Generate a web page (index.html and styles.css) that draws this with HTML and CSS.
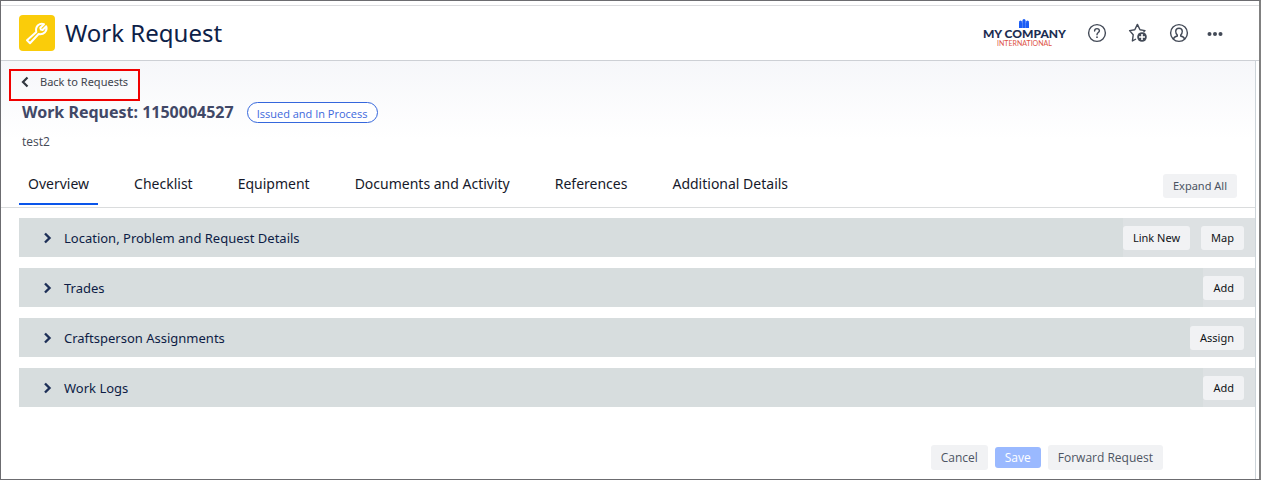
FILE: index.html
```html
<!DOCTYPE html>
<html lang="en">
<head>
<meta charset="utf-8">
<title>Work Request</title>
<meta name="viewport" content="width=device-width, initial-scale=1">
<link rel="stylesheet" href="styles.css">
</head>
<body>
<div class="window">
  <header class="app-header">
    <div class="app-icon">
      <svg width="36" height="36" viewBox="0 0 36 36" fill="none" stroke="#fff" stroke-width="2" stroke-linejoin="round">
        <path d="M8 25.300L17.300 17Q16.300 12.800 19 10.200Q21.700 8 25 9.200L21.300 12.700L21.800 14.500L23.600 15L27.200 11.300Q28.400 14.500 26 17.200Q23.400 19.800 19.600 19L11 28.300Z"/>
      </svg>
    </div>
    <h1>Work Request</h1>
    <div class="company-logo">
      <svg width="12" height="10" viewBox="0 0 12 10" fill="#1a5cf5">
        <circle cx="2.500" cy="3" r="1.500"/><circle cx="6" cy="1.600" r="1.500"/><circle cx="9.500" cy="3" r="1.500"/>
        <path d="M1 3.500h3.200v5.500H1zM4.400 2h3.200v7H4.400zM7.800 3.500H11V9H7.800z"/>
      </svg>
      <span class="company-name">MY COMPANY</span>
      <span class="company-sub">INTERNATIONAL</span>
    </div>
    <nav class="header-actions">
      <button type="button" aria-label="Help">
        <svg width="20" height="20" viewBox="0 0 20 20" fill="none" stroke="#434a57" stroke-width="1.400">
          <circle cx="10" cy="10" r="8.400"/>
          <path d="M7.600 8Q7.600 5.600 10 5.600T12.400 7.800C12.400 9.600 10 9.600 10 11.800" stroke-linecap="round"/>
          <circle cx="10" cy="14.200" r=".9" fill="#434a57" stroke="none"/>
        </svg>
      </button>
      <button type="button" aria-label="Add to favorites">
        <svg width="20" height="20" viewBox="0 0 20 20" fill="none" stroke="#434a57" stroke-width="1.400" stroke-linejoin="round">
          <path d="M8 16L4.400 18L5.200 11.800L1.600 7.600L6.800 6.800L9.400 1.400L12 6.800L17 7.600L15.500 9.200"/>
          <circle cx="14" cy="14" r="4.800" fill="#434a57" stroke="none"/>
          <path d="M14 11v6M11 14h6" stroke="#fff" stroke-width="1.600"/>
        </svg>
      </button>
      <button type="button" aria-label="Profile">
        <svg width="20" height="20" viewBox="0 0 20 20" fill="none" stroke="#434a57" stroke-width="1.400">
          <circle cx="10" cy="10" r="8.400"/>
          <path d="M4.400 16Q5 13.700 8.300 13V12Q6.700 10.600 6.700 8.300Q6.900 5.300 10 5.300T13.300 8.300Q13.300 10.600 11.700 12V13Q15 13.700 15.600 16"/>
        </svg>
      </button>
      <button type="button" class="more" aria-label="More">
        <svg width="16" height="20" viewBox="0 0 16 20" fill="#434a57">
          <circle cx="2.500" cy="11" r="2"/><circle cx="8" cy="11" r="2"/><circle cx="13.500" cy="11" r="2"/>
        </svg>
      </button>
    </nav>
  </header>

  <main class="content">
    <section class="request-header">
      <a class="back-link" href="#">
        <svg width="8" height="12" viewBox="0 0 8 12" fill="none" stroke="#32373f" stroke-width="2.200"><path d="M6.500 1.500L2 6l4.500 4.500"/></svg>
        Back to Requests
      </a>
      <div class="request-title">
        <h2>Work Request: 1150004527</h2>
        <span class="status">Issued and In Process</span>
      </div>
      <p class="description">test2</p>
    </section>

    <div class="tab-bar">
      <nav class="tabs">
        <a class="active" href="#">Overview</a>
        <a href="#">Checklist</a>
        <a href="#">Equipment</a>
        <a href="#">Documents and Activity</a>
        <a href="#">References</a>
        <a href="#">Additional Details</a>
      </nav>
      <button type="button" class="btn expand">Expand All</button>
    </div>

    <div class="panels">
      <section class="panel">
        <h3><svg width="9" height="12" viewBox="0 0 9 12" fill="none" stroke="#1d2f57" stroke-width="2.400"><path d="M2 1.500L6.500 6L2 10.500"/></svg>Location, Problem and Request Details</h3>
        <div class="panel-actions">
          <button type="button" class="btn">Link New</button>
          <button type="button" class="btn">Map</button>
        </div>
      </section>
      <section class="panel">
        <h3><svg width="9" height="12" viewBox="0 0 9 12" fill="none" stroke="#1d2f57" stroke-width="2.400"><path d="M2 1.500L6.500 6L2 10.500"/></svg>Trades</h3>
        <div class="panel-actions">
          <button type="button" class="btn">Add</button>
        </div>
      </section>
      <section class="panel">
        <h3><svg width="9" height="12" viewBox="0 0 9 12" fill="none" stroke="#1d2f57" stroke-width="2.400"><path d="M2 1.500L6.500 6L2 10.500"/></svg>Craftsperson Assignments</h3>
        <div class="panel-actions">
          <button type="button" class="btn">Assign</button>
        </div>
      </section>
      <section class="panel">
        <h3><svg width="9" height="12" viewBox="0 0 9 12" fill="none" stroke="#1d2f57" stroke-width="2.400"><path d="M2 1.500L6.500 6L2 10.500"/></svg>Work Logs</h3>
        <div class="panel-actions">
          <button type="button" class="btn">Add</button>
        </div>
      </section>
    </div>

    <footer class="form-actions">
      <button type="button" class="btn">Cancel</button>
      <button type="button" class="btn save">Save</button>
      <button type="button" class="btn">Forward Request</button>
    </footer>
  </main>
</div>
</body>
</html>
```
FILE: styles.css
```css
* { box-sizing: border-box; }
body { margin: 0; background-color: #fff; font-family: "Noto Sans", sans-serif; color: #16192a; }
h1, h2, h3, p { margin: 0; }
svg { display: block; }
a { color: inherit; text-decoration: none; }
button { font-family: inherit; cursor: pointer; }

.window { display: flex; flex-direction: column; min-height: 100vh; margin-right: 9px; padding-top: 4px; border: 1px solid #6c6c70; border-right: 2px solid #808080; }

/* header */
.app-header { display: flex; align-items: center; height: 56px; padding: 0 36px 0 18px; border-top: 1px solid #dcdde0; border-bottom: 1px solid #cdd0d5; }
.app-icon { background-color: #facc0a; border-radius: 4px; margin-right: 10px; }
.app-header h1 { font-size: 24px; font-weight: 400; line-height: 32px; color: #0d2148; }
.company-logo { display: flex; flex-direction: column; align-items: center; margin-left: auto; margin-right: 18px; font-family: Lato, sans-serif; }
.company-name { font-size: 12px; font-weight: 900; line-height: 10px; color: #1c2e52; }
.company-sub { font-size: 7px; line-height: 8px; color: #dd5345; }
.header-actions { display: flex; gap: 15px; }
.header-actions button { display: flex; justify-content: center; width: 26px; padding: 0; border: 0; background: none; }
.header-actions .more { width: 16px; }

/* request summary */
.content { flex: 1; margin-right: 3px; border-right: 1px solid #cdd4d9; }
.request-header { height: 98px; padding: 8px 8px 0; background: linear-gradient(#f6f7fa, #fff 80%); }
.back-link { display: inline-flex; gap: 11px; height: 32px; padding: 3px 10px 0; border: 2px solid #f00000; font-size: 11px; line-height: 16px; color: #3f444d; }
.back-link svg { margin-top: 2px; }
.request-title { display: flex; align-items: center; gap: 13px; padding-left: 13px; }
.request-title h2 { font-size: 16px; line-height: 22px; color: #414867; }
.status { height: 21px; padding: 0 9px; border: 1px solid #3567dc; border-radius: 11px; background-color: #fff; font-family: "Open Sans", sans-serif; font-size: 11px; line-height: 22px; color: #3d68dc; }
.description { padding: 10px 13px 0; font-family: "Open Sans", sans-serif; font-size: 12px; line-height: 18px; color: #434956; }

/* tabs */
.tab-bar { display: flex; justify-content: space-between; align-items: flex-end; height: 49px; padding: 0 18px; border-bottom: 1px solid #dadcdd; }
.tabs { display: flex; gap: 27px; margin-bottom: 2px; }
.tabs a { padding: 0 9px 9px; border-bottom: 2px solid transparent; font-size: 14px; line-height: 20px; }
.tabs a.active { border-color: #0a55ea; }
.btn { height: 24px; padding: 0 10px; border: 0; border-radius: 3px; background-color: #f1f2f4; font-size: 11px; line-height: 16px; color: #101217; }
.btn.expand { margin-bottom: 9px; color: #4a5262; }

/* panels */
.panels { display: grid; gap: 11px; padding: 10px 0 0 18px; }
.panel { display: flex; justify-content: space-between; background-color: #dde1e3; }
.panel h3 { flex: 1; display: flex; align-items: center; gap: 12px; height: 39px; padding-left: 24px; background-color: #d7ddde; font-size: 13px; font-weight: 400; line-height: 20px; color: #0d1c45; }
.panel-actions { display: flex; align-items: center; gap: 11px; padding-right: 11px; }

/* form buttons */
.form-actions { display: flex; align-items: center; justify-content: flex-end; gap: 7px; padding: 38px 92px 9px 18px; }
.form-actions .btn { height: 25px; font-family: "Open Sans", sans-serif; font-size: 12px; color: #4d5563; }
.form-actions .btn.save { height: 21px; background-color: #9ab9ff; color: #fff; }
```
